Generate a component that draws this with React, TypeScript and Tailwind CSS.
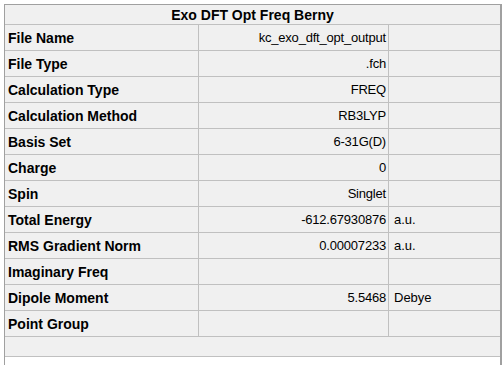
import React from 'react';

interface Row {
    label: string;
    value: string;
    unit?: string;
}

const rows: Row[] = [
    { label: 'File Name', value: 'kc_exo_dft_opt_output' },
    { label: 'File Type', value: '.fch' },
    { label: 'Calculation Type', value: 'FREQ' },
    { label: 'Calculation Method', value: 'RB3LYP' },
    { label: 'Basis Set', value: '6-31G(D)' },
    { label: 'Charge', value: '0' },
    { label: 'Spin', value: 'Singlet' },
    { label: 'Total Energy', value: '-612.67930876', unit: 'a.u.' },
    { label: 'RMS Gradient Norm', value: '0.00007233', unit: 'a.u.' },
    { label: 'Imaginary Freq', value: '' },
    { label: 'Dipole Moment', value: '5.5468', unit: 'Debye' },
    { label: 'Point Group', value: '' },
];

const App: React.FC = () => {
    return (
        <div className="w-[504px] h-[365px] bg-white overflow-hidden font-['Liberation_Sans',Arial,sans-serif] text-[13px] text-black">
            <div className="ml-1 mt-1 w-[498px] h-[361px] border-l border-t border-r-2 border-[#a0a0a0] bg-white">
                {/* Title */}
                <div className="h-[20px] flex items-center justify-center bg-[#f0f0f0] border-b border-[#c0c0c0] font-bold text-[14px] leading-none">
                    Exo DFT Opt Freq Berny
                </div>

                {/* Property rows */}
                {rows.map((row) => (
                    <div key={row.label} className="h-[26px] flex bg-[#f0f0f0] border-b border-[#c0c0c0] leading-none">
                        <div className="w-[194px] flex items-center pl-[3px] border-r border-[#c0c0c0] font-bold text-[14px]">
                            {row.label}
                        </div>
                        <div className="w-[190px] flex items-center justify-end pr-[2px] border-r border-[#c0c0c0] tracking-[-0.2px]">
                            {row.value}
                        </div>
                        <div className="flex-1 flex items-center pl-[5px]">
                            {row.unit}
                        </div>
                    </div>
                ))}

                {/* Empty footer strip */}
                <div className="h-[20px] bg-[#f0f0f0] border-b border-[#c0c0c0]" />
            </div>
        </div>
    );
};

export default App;
